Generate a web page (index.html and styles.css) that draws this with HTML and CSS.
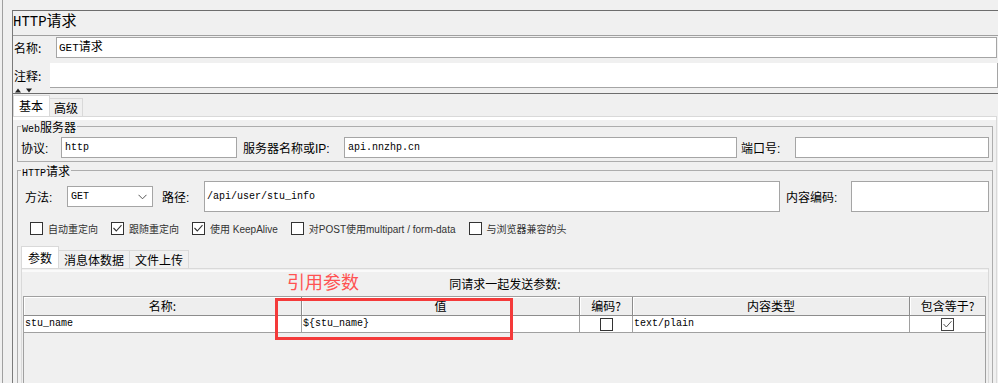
FILE: index.html
```html
<!DOCTYPE html>
<html lang="zh-CN">
<head>
    <meta charset="UTF-8">
    <meta name="viewport" content="width=device-width, initial-scale=1.0">
    <title>HTTP请求</title>
    <link rel="stylesheet" href="styles.css">
</head>
<body>

    <div class="shell">
        <div class="panel">
            <div class="title"><span class="title-lat">HTTP</span>请求</div>

            <div class="meta">
                <div class="meta-row name-row">
                    <span class="meta-label">名称:</span>
                    <div class="text-field"><span class="mono">GET</span>请求</div>
                </div>
                <div class="meta-row comment-row">
                    <span class="meta-label short">注释:</span>
                    <div class="text-area"></div>
                </div>
            </div>

            <div class="splitter">
                <svg width="22" height="5" viewBox="0 0 22 5">
                    <polygon points="2,4.5 5,0.5 8,4.5" fill="#222"/>
                    <polygon points="13,0.5 19,0.5 16,4.5" fill="#222"/>
                </svg>
            </div>

            <div class="tabs-area">
                <div class="tabs">
                    <span class="tab active">基本</span>
                    <span class="tab">高级</span>
                </div>

                <div class="tab-pane">
                    <fieldset class="group">
                        <legend><span class="mono">Web</span>服务器</legend>
                        <div class="form-row web-row">
                            <span class="lbl lbl-proto">协议:</span>
                            <div class="input input-proto mono">http</div>
                            <span class="lbl lbl-server">服务器名称或IP:</span>
                            <div class="input grow mono">api.nnzhp.cn</div>
                            <span class="lbl lbl-port">端口号:</span>
                            <div class="input input-port"></div>
                        </div>
                    </fieldset>

                    <fieldset class="group">
                        <legend><span class="mono">HTTP</span>请求</legend>
                        <div class="form-row req-row">
                            <span class="lbl lbl-method">方法:</span>
                            <div class="select">
                                <span class="mono">GET</span>
                                <svg width="9" height="6" viewBox="0 0 9 6"><path d="M0.5 0.8 L4.5 4.8 L8.5 0.8" fill="none" stroke="#555" stroke-width="1"/></svg>
                            </div>
                            <span class="lbl lbl-path">路径:</span>
                            <div class="input tall grow mono">/api/user/stu_info</div>
                            <span class="lbl lbl-enc">内容编码:</span>
                            <div class="input tall input-enc"></div>
                        </div>

                        <div class="checks">
                            <label class="check">
                                <svg class="cb" width="13" height="13" viewBox="0 0 13 13"><rect x="0.5" y="0.5" width="12" height="12" fill="#fff" stroke="#333"/></svg>
                                自动重定向
                            </label>
                            <label class="check">
                                <svg class="cb" width="13" height="13" viewBox="0 0 13 13"><rect x="0.5" y="0.5" width="12" height="12" fill="#fff" stroke="#333"/><path d="M2.5 6 L5.3 9 L10.5 3.2" fill="none" stroke="#333" stroke-width="1.1"/></svg>
                                跟随重定向
                            </label>
                            <label class="check">
                                <svg class="cb" width="13" height="13" viewBox="0 0 13 13"><rect x="0.5" y="0.5" width="12" height="12" fill="#fff" stroke="#333"/><path d="M2.5 6 L5.3 9 L10.5 3.2" fill="none" stroke="#333" stroke-width="1.1"/></svg>
                                使用 KeepAlive
                            </label>
                            <label class="check">
                                <svg class="cb" width="13" height="13" viewBox="0 0 13 13"><rect x="0.5" y="0.5" width="12" height="12" fill="#fff" stroke="#333"/></svg>
                                对POST使用multipart / form-data
                            </label>
                            <label class="check">
                                <svg class="cb" width="13" height="13" viewBox="0 0 13 13"><rect x="0.5" y="0.5" width="12" height="12" fill="#fff" stroke="#333"/></svg>
                                与浏览器兼容的头
                            </label>
                        </div>

                        <div class="tabs inner-tabs">
                            <span class="tab active">参数</span>
                            <span class="tab">消息体数据</span>
                            <span class="tab">文件上传</span>
                        </div>

                        <div class="inner-pane">
                            <div class="caption">同请求一起发送参数:</div>

                            <div class="table-pane">
                                <div class="grid-row head">
                                    <div class="cell">名称:</div>
                                    <div class="cell">值</div>
                                    <div class="cell">编码?</div>
                                    <div class="cell">内容类型</div>
                                    <div class="cell">包含等于?</div>
                                </div>
                                <div class="grid-row data">
                                    <div class="cell mono">stu_name</div>
                                    <div class="cell mono">${stu_name}</div>
                                    <div class="cell center">
                                        <svg width="13" height="13" viewBox="0 0 13 13"><rect x="0.5" y="0.5" width="12" height="12" fill="#fff" stroke="#333"/></svg>
                                    </div>
                                    <div class="cell mono">text/plain</div>
                                    <div class="cell center">
                                        <svg width="13" height="13" viewBox="0 0 13 13"><rect x="0.5" y="0.5" width="12" height="12" fill="#fff" stroke="#444"/><path d="M2.5 6 L5.3 9 L10.5 3.2" fill="none" stroke="#555" stroke-width="1"/></svg>
                                    </div>
                                </div>
                            </div>

                            <!-- red annotation drawn over the table -->
                            <div class="note">引用参数</div>
                            <div class="note-box"></div>
                        </div>
                    </fieldset>
                </div>
            </div>
        </div>
    </div>

</body>
</html>
```

FILE: styles.css
```css
html, body {
    margin: 0;
    padding: 0;
}

body {
    background: #f0f0f0;
    font-family: "Liberation Sans", "Noto Sans CJK SC", sans-serif;
    font-size: 12px;
    color: #000;
    height: 383px;
    overflow: hidden;
}

.mono {
    font-family: "Liberation Mono", "Noto Sans CJK SC", monospace;
    font-size: 10px;
}

/* outer frame lines */
.shell {
    margin-left: 2px;
    border-left: 1px solid #a0a0a0;
    padding: 10px 0 0 9px;
    height: 373px;
}

.panel {
    border-left: 1px solid #7a7a7a;
    border-top: 1px solid #6d6d6d;
    height: 372px;
}

.title {
    height: 24px;
    box-sizing: border-box;
    line-height: 17px;
    font-family: "Noto Sans CJK SC", sans-serif;
    font-size: 15px;
}

.title-lat {
    font-family: "Liberation Mono", monospace;
    font-size: 14px;
}

/* name / comment */
.meta {
    border-top: 1px solid #a0a0a0;
    padding: 1px 1px 0 0;
}

.meta-row {
    display: flex;
    align-items: center;
}

.meta-label {
    width: 42px;
    padding-left: 1px;
    font-family: "Noto Sans CJK SC", sans-serif;
}

.meta-label.short {
    width: 36px;
}

.name-row {
    height: 21px;
}

.text-field {
    flex: 1;
    height: 21px;
    box-sizing: border-box;
    border: 1px solid #a5a5a5;
    background: #fff;
    padding-left: 2px;
    line-height: 19px;
}

.text-field .mono {
    font-size: 11px;
}

.comment-row {
    margin-top: 5px;
    height: 25px;
    align-items: stretch;
}

.comment-row .meta-label {
    display: flex;
    align-items: center;
}

.text-area {
    flex: 1;
    background: #fff;
    border-right: 1px solid #a5a5a5;
    border-bottom: 1px solid #a5a5a5;
    margin-right: -1px;
}

.splitter {
    height: 5px;
}

.splitter svg {
    display: block;
}

/* tabs */
.tabs-area {
    border-top: 1px solid #6d6d6d;
}

.tabs {
    display: flex;
    align-items: flex-end;
    height: 22px;
}

.tab {
    height: 18px;
    box-sizing: border-box;
    border: 1px solid #d9d9d9;
    border-bottom: none;
    border-left: none;
    padding: 0 4px;
    line-height: 17px;
    font-family: "Noto Sans CJK SC", sans-serif;
    background: #f0f0f0;
}

.tab.active {
    height: 21px;
    border-left: 1px solid #d9d9d9;
    padding: 0 6px 0 5px;
    line-height: 19px;
    background: #fff;
}

.tab-pane {
    border-top: 1px solid #d9d9d9;
    border-right: 1px solid #d9d9d9;
    margin-right: 1px;
    padding: 3px 3px 0 4px;
    box-shadow: inset 0 3px 0 #fff;
    height: 300px;
}

/* group boxes */
.group {
    margin: 0;
    padding: 0 3px 3px 3px;
    border: 1px solid #adadad;
    min-width: 0;
}

.group + .group {
    margin-top: 2px;
    height: 260px;
}

.group legend {
    display: block;
    height: 13px;
    padding: 0 1px;
    line-height: 13px;
    font-family: "Noto Sans CJK SC", sans-serif;
    font-size: 12px;
    white-space: nowrap;
}

.group legend .mono {
    line-height: 1;
}

.form-row {
    display: flex;
    align-items: center;
    margin-top: 4px;
}

.web-row {
    height: 21px;
}

.req-row {
    height: 31px;
    padding-left: 4px;
}

.lbl {
    flex: none;
    white-space: nowrap;
}

.lbl-proto { width: 40px; }
.lbl-server { width: 101px; margin-left: 6px; }
.lbl-port { width: 54px; margin-left: 4px; }
.lbl-method { width: 42px; }
.lbl-path { width: 42px; margin-left: 9px; }
.lbl-enc { width: 65px; margin-left: 6px; }

.input {
    height: 21px;
    box-sizing: border-box;
    border: 1px solid #a5a5a5;
    background: #fff;
    padding-left: 3px;
    line-height: 19px;
    white-space: nowrap;
    overflow: hidden;
}

.input.tall {
    height: 31px;
    line-height: 29px;
    padding-left: 2px;
}

.grow {
    flex: 1;
    min-width: 0;
}

.input-proto { width: 176px; }
.input-port { width: 194px; }
.input-enc { width: 138px; }

.select {
    width: 86px;
    height: 21px;
    box-sizing: border-box;
    border: 1px solid #a5a5a5;
    background: #fff;
    display: flex;
    align-items: center;
    justify-content: space-between;
    padding: 0 5px 0 3px;
}

/* checkbox row */
.checks {
    display: flex;
    align-items: center;
    gap: 13px;
    height: 13px;
    margin-top: 10px;
    padding-left: 9px;
}

.check {
    display: flex;
    align-items: center;
    gap: 5px;
    font-size: 10px;
    color: #333;
    white-space: nowrap;
}

.cb {
    display: block;
    flex: none;
}

.inner-tabs {
    margin-top: 11px;
}

.inner-tabs .tab.active {
    height: 22px;
    line-height: 21px;
    padding: 0 6px;
}

.inner-tabs .tab {
    padding: 0 5px;
}

/* params pane */
.inner-pane {
    position: relative;
    border: 1px solid #d9d9d9;
    border-bottom: none;
    height: 130px;
}

.caption {
    margin-top: 1px;
    border-top: 2px solid #fafafa;
    height: 24px;
    line-height: 24px;
    text-align: center;
    font-family: "Noto Sans CJK SC", sans-serif;
}

.table-pane {
    margin: 0 2px 0 1px;
    border: 1px solid #a0a0a0;
    border-bottom: none;
    height: 110px;
}

.grid-row {
    display: grid;
    grid-template-columns: 278px 278px 53px 277px 1fr;
}

.cell {
    box-sizing: border-box;
    white-space: nowrap;
    overflow: hidden;
}

.head .cell {
    height: 19px;
    line-height: 18px;
    text-align: center;
    border-right: 1px solid #8c8c8c;
    border-bottom: 1px solid #8c8c8c;
    box-shadow: inset 1px 1px 0 #fff;
    background: #eeeeee;
    font-family: "Noto Sans CJK SC", sans-serif;
}

.data .cell {
    height: 17px;
    line-height: 16px;
    background: #fff;
    border-right: 1px solid #a0a0a0;
    border-bottom: 1px solid #a0a0a0;
    padding-left: 1px;
}

.head .cell:last-child,
.data .cell:last-child {
    border-right: none;
}

.data .cell.center {
    display: flex;
    align-items: center;
    justify-content: center;
    padding-left: 0;
}

.note {
    position: absolute;
    left: 265px;
    top: 0;
    line-height: 24px;
    font-family: "Noto Sans CJK SC", sans-serif;
    font-size: 18px;
    color: #ff5252;
}

.note-box {
    position: absolute;
    left: 253px;
    top: 29px;
    width: 238px;
    height: 42px;
    box-sizing: border-box;
    border: 3px solid #f43a3a;
}
```
